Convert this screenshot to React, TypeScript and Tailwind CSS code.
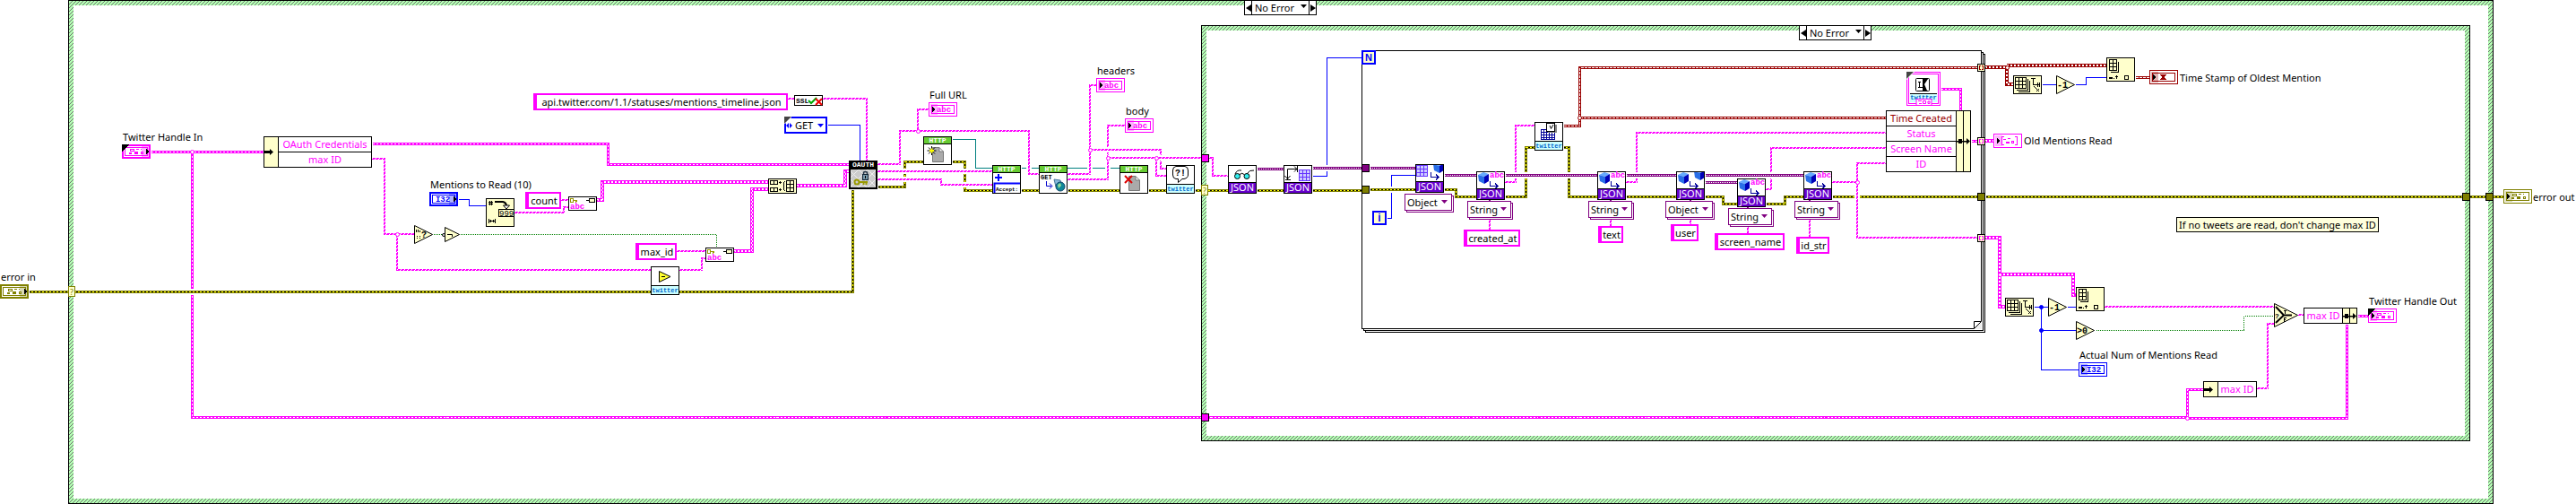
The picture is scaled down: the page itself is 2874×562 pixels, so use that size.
import React from "react";

type WireKind =
  | "string"
  | "stringArray"
  | "cluster"
  | "clusterArray"
  | "error"
  | "time"
  | "timeArray"
  | "object"
  | "blue"
  | "teal"
  | "bool"
  | "stub";

type Layer = { c: string; w: number; dash?: string; phase?: number; d?: number };

const PINK = "#ff00ff";
const RED = "#990000";
const PURPLE = "#800080";
const OLIVE = "#808000";
const CREAM = "#ffffcc";

const KINDS: Record<WireKind, { shift: number; layers: Layer[] }> = {
  string: {
    shift: 0,
    layers: [
      { c: PINK, w: 2 },
      { c: "#ffffff", w: 1, dash: "1 3", d: -0.5 },
      { c: "#ffffff", w: 1, dash: "1 3", phase: 2, d: 0.5 },
    ],
  },
  stringArray: {
    shift: 0,
    layers: [
      { c: PINK, w: 4 },
      { c: "#ffffff", w: 1, dash: "2 2", d: -0.5 },
      { c: "#ffffff", w: 1, dash: "2 2", phase: 1, d: 0.5 },
    ],
  },
  cluster: { shift: 0.5, layers: [{ c: PINK, w: 3 }, { c: "#ffffff", w: 1, dash: "2 2" }] },
  clusterArray: {
    shift: 0,
    layers: [
      { c: PINK, w: 4 },
      { c: "#ffffff", w: 1, dash: "2 2", d: -0.5 },
      { c: "#ffffff", w: 1, dash: "2 2", phase: 1, d: 0.5 },
    ],
  },
  error: {
    shift: 0.5,
    layers: [
      { c: OLIVE, w: 3 },
      { c: "#ffff00", w: 1 },
      { c: "#000000", w: 1, dash: "2 2" },
    ],
  },
  time: { shift: 0.5, layers: [{ c: RED, w: 3 }, { c: "#ffffff", w: 1, dash: "3 1" }] },
  timeArray: {
    shift: 0,
    layers: [
      { c: RED, w: 4 },
      { c: "#ffffff", w: 1, dash: "2 2", d: -0.5 },
      { c: "#ffffff", w: 1, dash: "2 2", phase: 1, d: 0.5 },
    ],
  },
  object: { shift: 0.5, layers: [{ c: PURPLE, w: 3 }, { c: "#ffffff", w: 1, dash: "1 1" }] },
  blue: { shift: 0.5, layers: [{ c: "#0000ff", w: 1 }] },
  teal: { shift: 0.5, layers: [{ c: "#008080", w: 1 }] },
  bool: { shift: 0.5, layers: [{ c: "#007f00", w: 1, dash: "1 1" }] },
  stub: { shift: 0, layers: [{ c: PURPLE, w: 2 }] },
};

/* kind, path, true when it jumps over the wires drawn before it */
const WIRES: [WireKind, string, boolean?][] = [
  ["cluster", "M168 169H294"],
  ["cluster", "M214 169V465H2440"],
  ["cluster", "M2440 466H2618V361"],
  ["cluster", "M2440 467V434H2458"],
  ["cluster", "M415 160H678V183H947"],
  ["string", "M415 177H429V261H462"],
  ["string", "M443 261V301H726"],
  ["string", "M758 301H783V288H787"],
  ["bool", "M483 261H493"],
  ["bool", "M513 261H799V276"],
  ["string", "M755 280H787"],
  ["string", "M626 223H634"],
  ["string", "M574 237H629V231H634"],
  ["blue", "M511 222H523V229H542"],
  ["stringArray", "M819 280H839V211H857"],
  ["stringArray", "M666 223H672V203H857"],
  ["stringArray", "M889 207H943V191H947"],
  ["string", "M879 110H886"],
  ["string", "M918 110H967V179"],
  ["blue", "M923 139H959V179"],
  ["error", "M32 325H951V211", true],
  ["error", "M979 208H1009V180H1030"],
  ["error", "M1062 180H1076V212H1107"],
  ["error", "M1139 212H1159"],
  ["error", "M1191 212H1249"],
  ["error", "M1281 212H1301"],
  ["error", "M1333 212H1370"],
  ["teal", "M1062 155H1088V187H1107"],
  ["teal", "M1139 187H1249"],
  ["string", "M979 191H1107", true],
  ["string", "M979 200H1050V206H1107", true],
  ["string", "M979 183H1004V146H1148V194H1159", true],
  ["string", "M1024 146V122H1036"],
  ["string", "M1191 200H1236V140H1255", true],
  ["string", "M1191 194H1216V95H1223", true],
  ["string", "M1216 167H1295V188H1301", true],
  ["string", "M1236 176H1340", true],
  ["string", "M1290 176V196H1301"],
  ["string", "M1349 176H1353V196H1370"],
  ["object", "M1402 188H1432"],
  ["blue", "M1464 196H1480V64H1519"],
  ["object", "M1464 187H1519", true],
  ["error", "M1402 212H1432"],
  ["error", "M1464 212H1519"],
  ["object", "M1528 187H1579"],
  ["blue", "M1547 243H1552V195H1579"],
  ["error", "M1528 211H1579", true],
  ["object", "M1611 195H1647"],
  ["error", "M1611 211H1624V219H1647"],
  ["string", "M1679 203H1691V140H1712"],
  ["error", "M1679 219H1702V164H1712"],
  ["error", "M1744 164H1750V219H1782"],
  ["time", "M1744 140H1762V75H2206"],
  ["time", "M1762 131H2104"],
  ["string", "M1814 203H1826V148H2104"],
  ["error", "M1814 219H1870"],
  ["object", "M1679 195H1782", true],
  ["object", "M1814 195H1870", true],
  ["error", "M1902 219H1922V227H1938"],
  ["error", "M1970 227H1991V219H2012"],
  ["string", "M1970 211H1976V165H2104"],
  ["object", "M1902 195H2012", true],
  ["object", "M1902 203H1938"],
  ["error", "M2044 219H2206"],
  ["string", "M2104 182H2072V265H2206", true],
  ["string", "M2044 203H2072"],
  ["cluster", "M2165 99H2187V123"],
  ["cluster", "M2199 157H2206"],
  ["clusterArray", "M2215 157H2224"],
  ["error", "M2215 219H2793"],
  ["timeArray", "M2215 75H2239V94H2246"],
  ["timeArray", "M2239 73H2350"],
  ["blue", "M2278 94H2294"],
  ["blue", "M2315 94H2327V86H2350"],
  ["time", "M2382 86H2398"],
  ["stringArray", "M2215 265H2231V342H2237"],
  ["stringArray", "M2231 306H2313V329H2316"],
  ["blue", "M2269 342H2285"],
  ["blue", "M2306 342H2316"],
  ["blue", "M2277 342V412H2319"],
  ["blue", "M2277 368H2316"],
  ["string", "M2348 342H2537"],
  ["bool", "M2338 368H2503V352H2537"],
  ["string", "M2518 433H2530V361H2537"],
  ["string", "M2564 351H2570"],
  ["cluster", "M2630 352H2642"],
  ["string", "M1662 245V256"],
  ["string", "M1797 245V252"],
  ["string", "M1886 245V250"],
  ["string", "M1950 253V260"],
  ["string", "M2019 245V264"],
  ["stub", "M1662 222V225"],
  ["stub", "M1797 222V225"],
  ["stub", "M1886 222V225"],
  ["stub", "M1950 230V233"],
  ["stub", "M2019 222V225"],
];

const JUNCTIONS: [number, number, string, boolean][] = [
  [214, 169, PINK, false],
  [443, 261, PINK, false],
  [1024, 146, PINK, false],
  [1216, 167, PINK, false],
  [1236, 176, PINK, false],
  [1290, 176, PINK, false],
  [2072, 203, PINK, false],
  [1762, 131, RED, false],
  [2239, 75, RED, false],
  [2231, 306, PINK, false],
  [2440, 466, PINK, false],
  [2277, 342, "#0000ff", true],
  [2277, 368, "#0000ff", true],
];

function Wire({ kind, d, over }: { kind: WireKind; d: string; over?: boolean }) {
  const k = KINDS[kind];
  return (
    <g transform={`translate(${k.shift} ${k.shift})`}>
      {over && <path d={d} stroke="#ffffff" strokeWidth={k.layers[0].w + 4} />}
      {k.layers.map((l, i) => (
        <path
          key={i}
          d={d}
          stroke={l.c}
          strokeWidth={l.w}
          strokeDasharray={l.dash}
          strokeDashoffset={l.phase}
          transform={l.d ? `translate(${l.d} ${l.d})` : undefined}
        />
      ))}
    </g>
  );
}

function Wires() {
  return (
    <svg
      width="2874"
      height="562"
      viewBox="0 0 2874 562"
      fill="none"
      className="relative block max-w-none"
      shapeRendering="crispEdges"
      aria-hidden="true"
    >
      {WIRES.map(([kind, d, over], i) => (
        <Wire key={i} kind={kind} d={d} over={over} />
      ))}
      {JUNCTIONS.map(([x, y, c, solid], i) => (
        <circle
          key={i}
          cx={x + 0.5}
          cy={y + 0.5}
          r={2}
          fill={solid ? c : "#ffffff"}
          stroke={c}
          strokeWidth={1}
          shapeRendering="auto"
        />
      ))}
    </svg>
  );
}

/* ---------- text parts ---------- */

function Label({ at, children }: { at: string; children: string }) {
  return <span className={`absolute leading-4 whitespace-nowrap ${at}`}>{children}</span>;
}

function StringConst({ at, children }: { at: string; children: string }) {
  return (
    <div
      className={`absolute flex h-[19px] items-center justify-center border-2 border-l-4 border-[#ff00ff] bg-white leading-4 whitespace-nowrap ${at}`}
    >
      {children}
    </div>
  );
}

function Caret({ className }: { className: string }) {
  return (
    <svg viewBox="0 0 7 4" className={`pointer-events-none absolute h-1 w-[7px] ${className}`} aria-hidden="true">
      <path d="M0 0H7L3.5 4Z" fill="currentColor" />
    </svg>
  );
}

function TypePicker({ at, value, name }: { at: string; value: "String" | "Object"; name: string }) {
  return (
    <div className={`absolute h-[19px] ${value === "String" ? "w-[49px]" : "w-[53px]"} ${at}`}>
      <div className="absolute top-0.5 left-0.5 h-full w-full border border-[#800080] bg-white" />
      <div className="relative h-full border border-[#800080] bg-white text-[#800080]">
        <select
          aria-label={name}
          defaultValue={value}
          className="block h-full w-full appearance-none bg-transparent pl-0.5 leading-4 text-black"
        >
          <option>String</option>
          <option>Object</option>
        </select>
        <Caret className="top-1.5 right-1" />
      </div>
    </div>
  );
}

function CaseSelector({ at, name }: { at: string; name: string }) {
  return (
    <div className={`absolute flex h-[17px] w-[81px] border border-black bg-white ${at}`}>
      <button type="button" aria-label="Previous case" className="flex w-[7px] items-center justify-center">
        <svg viewBox="0 0 6 8" className="h-2 w-1.5">
          <path d="M6 0V8L0 4Z" />
        </svg>
      </button>
      <div className="relative grow border-x border-black">
        <select
          aria-label={name}
          defaultValue="No Error"
          className="block h-full w-full appearance-none bg-transparent pl-[3px] leading-4"
        >
          <option>No Error</option>
          <option>Error</option>
        </select>
        <Caret className="top-1 right-0.5" />
      </div>
      <button type="button" aria-label="Next case" className="flex w-[7px] items-center justify-center">
        <svg viewBox="0 0 6 8" className="h-2 w-1.5">
          <path d="M0 0V8L6 4Z" />
        </svg>
      </button>
    </div>
  );
}

function CaseFrame({ at }: { at: string }) {
  return (
    <div
      className={`absolute border border-black bg-[linear-gradient(135deg,#b3ffb3_40%,#707070_40%_60%,#b3ffb3_60%)] bg-size-[4px_4px] p-[5px] ${at}`}
    >
      <div className="h-full bg-white" />
    </div>
  );
}

/* ---------- terminals ---------- */

const MONO = "font-['Liberation_Mono',monospace] font-bold";

function ClusterGlyph({ x, c }: { x: number; c: string }) {
  return (
    <g transform={`translate(${x} 0)`} fill="none" stroke={c}>
      <rect x="1.5" y="5.5" width="4" height="2" />
      <path d="M8 5.5H11M13 5.5H14" />
      <path d="M0 9.5H3M0 10.5H3M6 8.5H10M6 9.5H10M6 10.5H10" />
      <rect x="13.5" y="8.5" width="2" height="2" />
    </g>
  );
}

function Terminal({
  at,
  color,
  text,
  control,
  corner,
  glyph,
}: {
  at: string;
  color: string;
  text?: string;
  control?: boolean;
  corner?: boolean;
  glyph?: "cluster" | "array" | "time";
}) {
  return (
    <svg viewBox="0 0 32 16" className={`absolute h-4 w-8 ${at}`} shapeRendering="crispEdges">
      <rect width="32" height="16" fill={color} />
      {control ? (
        <rect x="2" y="2" width="28" height="12" fill="#ffffff" />
      ) : (
        <rect x="1" y="1" width="30" height="14" fill="#ffffff" />
      )}
      {glyph !== "array" && <rect x="3.5" y="3.5" width="25" height="9" fill="none" stroke={color} />}
      {text && (
        <text
          x={control ? 15 : 17}
          y="11"
          textAnchor="middle"
          fill={color}
          className={`${MONO} text-[9px]`}
        >
          {text}
        </text>
      )}
      {glyph === "cluster" && <ClusterGlyph x={control ? 8 : 9} c={color} />}
      {glyph === "array" && (
        <g stroke={color} fill="none">
          <path d="M24 3.5H26.5V12.5H24M12 3.5H9.5V12.5H12" />
          <path d="M11 6.5H14M16 5.5H19M14 9.5H18M14 10.5H18" />
          <rect x="20.5" y="8.5" width="2" height="2" />
        </g>
      )}
      {glyph === "time" && (
        <g fill={color}>
          <path d="M12 5H19V6H18L16.5 8L18 10H19V11H12V10H13L14.5 8L13 6H12Z" />
        </g>
      )}
      <rect x={control ? 22 : 2} y="2" width="8" height="12" fill={color} opacity="0.3" />
      <path d={control ? "M27 5L30 8L27 11Z" : "M4 4.5L7 8L4 11.5Z"} fill="#000000" />
      {corner && <path d="M0 0H8L0 8Z" fill="#000000" />}
    </svg>
  );
}

function Tunnel({ at, fill }: { at: string; fill: string }) {
  return <div className={`absolute h-[9px] w-[9px] border border-black ${fill} ${at}`} />;
}

function IndexTunnel({ at, color }: { at: string; color: string }) {
  return (
    <svg viewBox="0 0 9 9" className={`absolute h-[9px] w-[9px] ${at}`} shapeRendering="crispEdges">
      <rect x="0.5" y="0.5" width="8" height="8" fill={CREAM} stroke="#000000" />
      <path d="M4 2.5H2.5V6.5H4M5 2.5H6.5V6.5H5" fill="none" stroke={color} />
    </svg>
  );
}

function ErrorSelector({ at }: { at: string }) {
  return (
    <div
      className={`absolute flex h-3 w-2 items-center justify-center border border-[#808000] bg-[#ffffcc] text-[9px] leading-none text-[#808000] ${at}`}
    >
      ?
    </div>
  );
}

/* ---------- node icons ---------- */

function Icon({ at, label, children }: { at: string; label: string; children: React.ReactNode }) {
  return (
    <svg
      viewBox="0 0 32 32"
      className={`absolute h-8 w-8 overflow-visible ${at}`}
      role="img"
      aria-label={label}
      fill="none"
    >
      <rect x="0.5" y="0.5" width="31" height="31" fill="#ffffff" stroke="#000000" />
      {children}
    </svg>
  );
}

function TwitterBand() {
  return (
    <g>
      <rect x="1" y="22" width="30" height="9" fill="#ccffff" />
      <path d="M0 21.5H32" stroke="#000000" />
      <text x="16" y="29" textAnchor="middle" fill="#0066cc" className={`${MONO} text-[7px]`}>
        twitter
      </text>
    </g>
  );
}

function JsonBand() {
  return (
    <g>
      <rect x="1" y="20" width="30" height="11" fill="#6600cc" />
      <path d="M0 19.5H32" stroke="#000000" />
      <text x="16" y="29" textAnchor="middle" fill="#ffffff" className="text-[11px]">
        JSON
      </text>
    </g>
  );
}

function HttpBand() {
  return (
    <g>
      <rect x="1" y="1" width="30" height="7" fill="#66cc33" />
      <path d="M0 8.5H32" stroke="#000000" />
      <text x="16" y="7" textAnchor="middle" fill="#ffffff" className={`${MONO} text-[8px]`}>
        HTTP
      </text>
    </g>
  );
}

function Cube({ x, y }: { x: number; y: number }) {
  return (
    <g transform={`translate(${x} ${y})`}>
      <path d="M0 3L6 0L12 2L7 5Z" fill="#66aaff" />
      <path d="M0 3L7 5V13L1 10Z" fill="#2a6fe8" />
      <path d="M7 5L12 2V10L7 13Z" fill="#0000b8" />
    </g>
  );
}

function Elbow({ x, y }: { x: number; y: number }) {
  return (
    <path
      transform={`translate(${x} ${y})`}
      d="M0.5 0V5.5H9M6 2.5L9 5.5L6 8.5"
      stroke="#000099"
      shapeRendering="crispEdges"
    />
  );
}

function Grid({ x, y }: { x: number; y: number }) {
  return (
    <g transform={`translate(${x} ${y})`} shapeRendering="crispEdges">
      <rect x="0.5" y="0.5" width="12" height="12" fill="#ccccff" stroke="#6633ff" />
      <path d="M4.5 0V13M8.5 0V13M0 4.5H13M0 8.5H13" stroke="#6633ff" />
    </g>
  );
}

/* the second cube is cut by the top edge of its node */
function CutCube({ x }: { x: number }) {
  return (
    <svg x="0" y="1" width="31" height="18">
      <Cube x={x} y={-4} />
    </svg>
  );
}

function JsonGet({ at, label, object }: { at: string; label: string; object?: boolean }) {
  return (
    <Icon at={at} label={label}>
      <Cube x={2} y={1} />
      {object ? (
        <CutCube x={20} />
      ) : (
        <text x="15" y="7" fill={PINK} className={`${MONO} text-[9px]`}>
          abc
        </text>
      )}
      <Elbow x={15} y={11} />
      <JsonBand />
    </Icon>
  );
}

function Page({ x, y }: { x: number; y: number }) {
  return (
    <path
      transform={`translate(${x} ${y})`}
      d="M0.5 0.5H8L12.5 5V16.5H0.5ZM8 0.5V5H12.5"
      fill="#aaaaaa"
      stroke="#777777"
    />
  );
}

function KeyAbc({ at }: { at: string }) {
  return (
    <svg
      viewBox="0 0 32 16"
      className={`absolute h-4 w-8 overflow-visible ${at}`}
      fill="none"
      shapeRendering="crispEdges"
    >
      <rect x="0.5" y="0.5" width="31" height="15" fill="#ffffff" stroke="#000000" />
      <path d="M2.5 2.5H5.5V6.5H2.5ZM6 4.5H10M8.5 4V7M9.5 4V6" stroke="#999900" />
      <text x="2" y="14" fill={PINK} className={`${MONO} text-[9px]`}>
        abc
      </text>
      <path d="M20 4.5H23" stroke="#000000" />
      <rect x="23.5" y="2.5" width="6" height="4" fill={CREAM} stroke="#000000" />
    </svg>
  );
}

function ArraySize({ at }: { at: string }) {
  return (
    <svg viewBox="0 0 32 21" className={`absolute h-[21px] w-8 ${at}`} fill="none" shapeRendering="crispEdges">
      <rect x="0.5" y="0.5" width="31" height="20" fill={CREAM} stroke="#000000" />
      <path d="M6 18.5H18.5V6M4 16.5H16.5V4" stroke="#000000" />
      <rect x="2.5" y="2.5" width="12" height="12" fill={CREAM} stroke="#000000" />
      <path d="M6.5 2V15M10.5 2V15M2 6.5H15M2 10.5H15" stroke="#000000" />
      <path d="M20 3.5H25M22.5 3V10.5H30M27.5 8V13M29.5 8V13M23 12L29 18M26 18L29 15" stroke="#000000" />
    </svg>
  );
}

function IndexArray({ at }: { at: string }) {
  return (
    <svg viewBox="0 0 32 27" className={`absolute h-[27px] w-8 ${at}`} fill="none" shapeRendering="crispEdges">
      <rect x="0.5" y="0.5" width="31" height="26" fill={CREAM} stroke="#000000" />
      <path d="M5 16.5H13.5V5" stroke="#000000" />
      <rect x="3.5" y="2.5" width="8" height="12" stroke="#000000" />
      <path d="M7.5 2V15M3 6.5H12M3 10.5H12" stroke="#000000" />
      <path d="M3 22.5H7M3 23.5H7M8 23.5H9M10 21.5H13M11.5 20V24" stroke="#000000" />
      <rect x="20.5" y="20.5" width="4" height="4" stroke="#000000" />
    </svg>
  );
}

function Tri({ at, text }: { at: string; text: string }) {
  return (
    <svg viewBox="0 0 21 21" className={`absolute h-[21px] w-[21px] ${at}`} fill="none">
      <path d="M0.5 0.5L20.5 10.5L0.5 20.5Z" fill={CREAM} stroke="#000000" />
      <text x="1" y="14" fill="#000000" className={`${MONO} text-[10px]`}>
        {text}
      </text>
    </svg>
  );
}

function BundleArrow() {
  return (
    <svg viewBox="0 0 10 7" className="h-[7px] w-2.5">
      <path d="M0 2H6V0L10 3.5L6 7V5H0Z" />
    </svg>
  );
}

const CELL = "box-content flex h-4 items-center justify-center whitespace-nowrap leading-4";

export default function App() {
  return (
    <main className="min-h-screen w-full overflow-x-auto bg-white font-['Noto_Sans',sans-serif] text-[11px] text-black">
      <div className="relative w-max">
        <CaseFrame at="left-[76px] top-0 w-[2706px] h-[562px]" />
        <CaseFrame at="left-[1340px] top-[28px] w-[1416px] h-[464px]" />
        <div className="absolute top-[60px] left-[1523px] h-[311px] w-[692px] border border-black bg-white" />
        <div className="absolute top-[58px] left-[1521px] h-[311px] w-[692px] border border-black bg-white" />
        <div className="absolute top-[56px] left-[1519px] h-[311px] w-[692px] border border-black bg-white" />

        <Wires />

        <svg viewBox="0 0 9 9" className="absolute top-[358px] left-[2202px] h-[9px] w-[9px]" fill="none">
          <path d="M0.5 8.5V0.5H8.5Z" fill="#ffffff" stroke="#000000" />
          <path d="M0 9L9 0V9Z" fill="#eeeeee" />
          <path d="M0.5 8.5L8.5 0.5" stroke="#000000" />
        </svg>

        <CaseSelector at="left-[1388px] top-0" name="Outer case" />
        <CaseSelector at="left-[2007px] top-[28px]" name="Inner case" />

        {/* inputs */}
        <Label at="left-[137px] top-[145px]">Twitter Handle In</Label>
        <Terminal at="left-[136px] top-[161px]" color={PINK} glyph="cluster" control corner />
        <Label at="left-px top-[301px]">error in</Label>
        <Terminal at="left-0 top-[317px]" color={OLIVE} glyph="cluster" control />
        <ErrorSelector at="left-[76px] top-[319px]" />

        <div className="absolute top-[152px] left-[294px] flex w-[121px] border border-black bg-white">
          <div className="flex w-4 items-center border-r border-black bg-[#ffffcc]">
            <BundleArrow />
          </div>
          <div className="grow divide-y divide-black text-[#ff00ff]">
            <div className={CELL}>OAuth Credentials</div>
            <div className={CELL}>max ID</div>
          </div>
        </div>

        {/* empty test and not */}
        <svg viewBox="0 0 21 21" className="absolute top-[251px] left-[462px] h-[21px] w-[21px]" fill="none">
          <path d="M0.5 0.5L20.5 10.5L0.5 20.5Z" fill={CREAM} stroke="#000000" />
          <path d="M2.5 5V8M4.5 5V8M6.5 6V8M3 12.5H4M6 12.5H7M3 14.5H4M6 14.5H7" stroke="#000000" />
          <text x="8" y="14" fill="#000000" className={`${MONO} text-[10px]`}>
            ?
          </text>
        </svg>
        <svg viewBox="0 0 20 17" className="absolute top-[253px] left-[493px] h-[17px] w-5" fill="none">
          <path d="M3.5 0.5L19.5 8.5L3.5 16.5Z" fill={CREAM} stroke="#000000" />
          <circle cx="2" cy="9" r="1.5" fill="#ffffff" stroke="#000000" />
          <path d="M6 8.5H11.5V11" stroke="#000000" />
        </svg>

        <Label at="left-[480px] top-[198px]">Mentions to Read (10)</Label>
        <Terminal at="left-[479px] top-[214px]" color="#0000ff" text="I32" control />
        <svg viewBox="0 0 32 32" className="absolute top-[221px] left-[542px] h-8 w-8" fill="none">
          <rect x="0.5" y="0.5" width="31" height="31" fill={CREAM} stroke="#000000" />
          <path d="M3 4.5H8M3 6.5H8M4.5 3V8M6.5 3V8" stroke="#000000" shapeRendering="crispEdges" />
          <path d="M10 4H19Q23 5 23 9" stroke="#000000" strokeWidth="2" />
          <path d="M19.5 8H26.5L23 12Z" fill="#ffffff" stroke="#000000" />
          <rect x="14.5" y="12.5" width="17" height="8" stroke="#000000" />
          <text x="15" y="20" fill="#000000" className="font-['Liberation_Mono',monospace] text-[9px]">
            999
          </text>
          <path d="M3.5 23V28M10.5 23V28M3 25.5H11M5.5 24V27M8.5 24V27" stroke="#000000" shapeRendering="crispEdges" />
        </svg>
        <StringConst at="left-[586px] top-[214px] w-[40px]">count</StringConst>
        <KeyAbc at="left-[634px] top-[219px]" />
        <StringConst at="left-[709px] top-[271px] w-[46px]">max_id</StringConst>
        <KeyAbc at="left-[787px] top-[276px]" />
        <Icon at="left-[726px] top-[297px]" label="Decrement identifier">
          <path d="M9.5 5.5L22 11.5L9.5 17.5Z" fill="#ffff33" stroke="#000000" />
          <path d="M12 11.5H16" stroke="#000000" />
          <TwitterBand />
        </Icon>

        <svg
          viewBox="0 0 32 17"
          className="absolute top-[199px] left-[857px] h-[17px] w-8"
          fill="none"
          shapeRendering="crispEdges"
        >
          <rect x="0.5" y="0.5" width="31" height="16" fill={CREAM} stroke="#000000" />
          <path d="M2.5 2.5H10.5V6.5H2.5ZM6.5 2V7M2.5 10.5H10.5V14.5H2.5ZM6.5 10V15" stroke="#000000" />
          <path d="M12 4.5H15M13.5 3V6M12 12.5H15M13.5 11V14" stroke="#000000" />
          <path d="M18.5 3L17.5 5V12L18.5 14M20.5 2.5H28.5V14.5H20.5ZM24.5 2V15M20 6.5H29M20 10.5H29" stroke="#000000" />
        </svg>

        <StringConst at="left-[595px] top-[104px] w-[284px]">
          api.twitter.com/1.1/statuses/mentions_timeline.json
        </StringConst>
        <svg viewBox="0 0 32 12" className="absolute top-[106px] left-[886px] h-3 w-8" fill="none">
          <rect x="0.5" y="0.5" width="31" height="11" fill="#ffffff" stroke="#000000" />
          <text x="2" y="9" fill="#000000" className={`${MONO} text-[8px]`}>
            SSL
          </text>
          <path d="M16 6L19 9L25 3" stroke="#00aa00" strokeWidth="2" />
          <path d="M24 4L31 11M31 4L24 11" stroke="#ee0000" strokeWidth="2" />
        </svg>

        <div className="absolute top-[130px] left-[875px] h-[19px] w-12 border-2 border-[#0000ff] bg-white text-[#0000ff]">
          <select
            aria-label="HTTP method"
            defaultValue="GET"
            className="block h-full w-full appearance-none bg-transparent pl-2.5 leading-4 text-black"
          >
            <option>GET</option>
            <option>POST</option>
          </select>
          <Caret className="top-1.5 right-0.5" />
          <svg viewBox="0 0 7 6" className="pointer-events-none absolute top-[5px] left-0 h-1.5 w-[7px]">
            <path d="M3 0V6L0 3ZM4 0V6L7 3Z" fill="#0000ff" />
          </svg>
          <svg viewBox="0 0 8 8" className="pointer-events-none absolute -top-0.5 -left-0.5 h-2 w-2">
            <path d="M0 0H8V1L1 8H0Z" fill="#ffffff" />
            <path d="M0 0H8L0 8Z" fill="#444444" />
          </svg>
        </div>

        <Icon at="left-[947px] top-[179px]" label="OAuth request">
          <rect x="2" y="10" width="28" height="20" fill="#cccccc" />
          <path
            d="M2 19L11 10M2 29L21 10M11 30L30 11M21 30L30 21M2 21L11 30M2 12L20 30M11 10L30 29M21 10L30 19"
            stroke="#eeeeee"
          />
          <rect x="0" y="0" width="32" height="9" fill="#000000" />
          <text x="16" y="7" textAnchor="middle" fill="#ffffff" className={`${MONO} text-[8px]`}>
            OAUTH
          </text>
          <path d="M16.5 17V14Q16.500 12.500 18.500 12.500Q20.500 12.500 20.500 14V17" stroke="#223344" strokeWidth="1.500" />
          <rect x="15.500" y="15.500" width="6" height="6" fill="#7799aa" stroke="#112233" />
          <path d="M18.500 17V20" stroke="#000000" />
          <circle cx="9" cy="24" r="2.500" stroke="#999900" strokeWidth="2" />
          <path d="M11 24H21M16.500 24V27M19.500 24V27" stroke="#999900" strokeWidth="2" />
          <rect x="1.500" y="9.500" width="29" height="21" stroke="#000000" />
          <path d="M0.500 8V31.500H31.500V8" stroke="#000000" />
        </Icon>

        {/* request chain */}
        <Icon at="left-[1030px] top-[152px]" label="Open HTTP handle">
          <Page x={10} y={12} />
          <path d="M9.500 11V21M4.500 16H14.500M6 12.500L13 19.500M13 12.500L6 19.500" stroke="#000000" />
          <path d="M9.500 13.500V18.500M7 16H12" stroke="#ffff00" strokeWidth="2" />
          <HttpBand />
        </Icon>
        <Icon at="left-[1107px] top-[184px]" label="Add HTTP header">
          <path d="M7 10V18M3 14H11" stroke="#0000ff" strokeWidth="2" />
          <path d="M2.500 31V20.500H31" stroke="#0000ff" strokeWidth="2" />
          <rect x="4" y="22" width="27" height="9" fill="#ffffff" />
          <text x="4" y="29" fill="#000000" className={`${MONO} text-[6px]`}>
            Accept:
          </text>
          <path d="M0.500 8V31.500H31.500V8" stroke="#000000" />
          <HttpBand />
        </Icon>
        <Icon at="left-[1159px] top-[184px]" label="HTTP GET">
          <text x="2" y="16" fill="#000000" className={`${MONO} text-[7px]`}>
            GET
          </text>
          <path d="M8.500 18V23.500H14M12 20.500L15 23.500L12 26.500" stroke="#0000cc" />
          <path d="M17 16L24 17L26 26L19 24Z" fill="#88bbdd" stroke="#447799" />
          <circle cx="24" cy="24" r="5" fill="#118899" stroke="#114466" />
          <path d="M21 22L24 20L25 23L22 26Z" fill="#99dd99" />
          <HttpBand />
        </Icon>
        <Icon at="left-[1249px] top-[184px]" label="Close HTTP handle">
          <Page x={10} y={12} />
          <path d="M6 12L14 20M14 12L6 20" stroke="#dd0000" strokeWidth="2" />
          <HttpBand />
        </Icon>
        <Icon at="left-[1301px] top-[184px]" label="Check response">
          <path
            d="M11 1.500H21Q24.500 2 24.500 6V11Q24.500 14.500 20 15.500H18L13.500 19.500V15.500H11Q7.500 15 7.500 11V6Q7.500 2 11 1.500Z"
            fill="#ffffff"
            stroke="#000000"
          />
          <text x="16" y="12" textAnchor="middle" fill="#000000" className={`${MONO} text-[10px]`}>
            ?!
          </text>
          <TwitterBand />
        </Icon>

        <Label at="left-[1037px] top-[98px]">Full URL</Label>
        <Terminal at="left-[1036px] top-[114px]" color={PINK} text="abc" />
        <Label at="left-[1224px] top-[71px]">headers</Label>
        <Terminal at="left-[1223px] top-[87px]" color={PINK} text="abc" />
        <Label at="left-[1256px] top-[116px]">body</Label>
        <Terminal at="left-[1255px] top-[132px]" color={PINK} text="abc" />

        <Tunnel at="left-[1340px] top-[172px]" fill="bg-[#ff00ff]" />
        <Tunnel at="left-[1340px] top-[461px]" fill="bg-[#ff00ff]" />
        <ErrorSelector at="left-[1340px] top-[206px]" />

        {/* parsing */}
        <Icon at="left-[1370px] top-[184px]" label="Read JSON">
          <path d="M8 10Q10 5 15 6M21 10Q24 5 29 6" stroke="#000000" />
          <path d="M13 10.500Q16 8 18 10.500" stroke="#000000" />
          <circle cx="10.500" cy="12.500" r="3" fill="#33eeee" stroke="#000000" />
          <circle cx="21" cy="12.500" r="3" fill="#33eeee" stroke="#000000" />
          <JsonBand />
        </Icon>
        <Icon at="left-[1432px] top-[184px]" label="JSON array size">
          <path
            d="M4.500 16V4.500H15M12 1.500L15 4.500L12 7.500M15.500 1V8M1.500 12L4.500 15.500L7.500 12M2 16.500H8"
            stroke="#000000"
          />
          <Grid x={17} y={5} />
          <JsonBand />
        </Icon>

        <svg viewBox="0 0 16 16" className="absolute top-[56px] left-[1519px] h-4 w-4">
          <rect x="1" y="1" width="14" height="14" fill={CREAM} stroke="#0000ff" strokeWidth="2" />
          <text
            x="8"
            y="12"
            textAnchor="middle"
            fill="#0000ff"
            className="font-['Liberation_Sans',sans-serif] text-[11px] font-bold"
          >
            N
          </text>
        </svg>
        <svg viewBox="0 0 16 16" className="absolute top-[235px] left-[1531px] h-4 w-4">
          <rect x="1" y="1" width="14" height="14" fill={CREAM} stroke="#0000ff" strokeWidth="2" />
          <text
            x="8"
            y="12"
            textAnchor="middle"
            fill="#0000ff"
            className="font-['Liberation_Sans',sans-serif] text-[12px] font-bold"
          >
            i
          </text>
        </svg>
        <Tunnel at="left-[1519px] top-[183px]" fill="bg-[#800080]" />
        <Tunnel at="left-[1519px] top-[207px]" fill="bg-[#808000]" />

        <Icon at="left-[1579px] top-[183px]" label="JSON array element">
          <Grid x={1} y={1} />
          <CutCube x={20} />
          <Elbow x={17} y={9} />
          <JsonBand />
        </Icon>
        <TypePicker at="left-[1567px] top-[216px]" value="Object" name="Element type" />

        <JsonGet at="left-[1647px] top-[191px]" label="Get created_at" />
        <TypePicker at="left-[1637px] top-[224px]" value="String" name="created_at type" />
        <StringConst at="left-[1633px] top-[256px] w-[63px]">created_at</StringConst>

        <Icon at="left-[1712px] top-[136px]" label="Parse time">
          <g shapeRendering="crispEdges">
            <path
              d="M7 8.500H22M7 11.500H23M7 14.500H23M7 17.500H23M7 19.500H23M7.500 8V20M10.500 8V20M13.500 8V20M16.500 8V20M19.500 8V20M22.500 8V20"
              stroke="#000099"
            />
            <rect x="14.500" y="2.500" width="10" height="9" fill="#888888" />
            <rect x="13.500" y="1.500" width="9" height="9" fill="#ffffff" stroke="#000000" />
          </g>
          <path d="M17 4L18.500 7.500L21 3" stroke="#000000" />
          <TwitterBand />
        </Icon>

        <JsonGet at="left-[1782px] top-[191px]" label="Get text" />
        <TypePicker at="left-[1772px] top-[224px]" value="String" name="text type" />
        <StringConst at="left-[1783px] top-[252px] w-[28px]">text</StringConst>

        <JsonGet at="left-[1870px] top-[191px]" label="Get user" object />
        <TypePicker at="left-[1858px] top-[224px]" value="Object" name="user type" />
        <StringConst at="left-[1864px] top-[250px] w-[31px]">user</StringConst>

        <JsonGet at="left-[1938px] top-[199px]" label="Get screen_name" />
        <TypePicker at="left-[1928px] top-[232px]" value="String" name="screen_name type" />
        <StringConst at="left-[1913px] top-[260px] w-[78px]">screen_name</StringConst>

        <JsonGet at="left-[2012px] top-[191px]" label="Get id_str" />
        <TypePicker at="left-[2002px] top-[224px]" value="String" name="id_str type" />
        <StringConst at="left-[2004px] top-[264px] w-[37px]">id_str</StringConst>

        <svg viewBox="0 0 38 38" className="absolute top-[80px] left-[2127px] h-[38px] w-[38px]" fill="none">
          <rect x="0.500" y="0.500" width="37" height="37" fill="#ffffff" stroke={PINK} />
          <rect x="2.500" y="2.500" width="33" height="33" stroke={PINK} />
          <rect x="10.500" y="7.500" width="15" height="14" rx="1" fill="#ffffff" stroke="#000000" />
          <path d="M18 8H24L20 14L23 21H18Z" fill="#000000" />
          <path d="M13 11.500H16M14.500 11V18M13 17.500H20M18 15L21 17.500L18 20" stroke="#000000" />
          <path d="M4 24.500H34" stroke="#000000" />
          <rect x="4" y="25" width="30" height="9" fill="#ccffff" />
          <text x="19" y="31" textAnchor="middle" fill="#0066cc" className={`${MONO} text-[7px]`}>
            twitter
          </text>
          <path d="M11 37V30.500H28V37" fill="#ffffff" stroke={PINK} />
          <path d="M13 32.500H17M14 35.500H17M18.500 32.500H21.500V35.500H18.500ZM24 33H26V35.500H24Z" stroke={PINK} />
          <path d="M0 0H9L0 9Z" fill="#ffffff" />
          <path d="M0 0H8L0 8Z" fill="#444444" />
        </svg>

        <div className="absolute top-[123px] left-[2104px] flex w-[95px] border border-black bg-white text-[#ff00ff]">
          <div className="grow divide-y divide-black">
            <div className={`${CELL} text-[#990000]`}>Time Created</div>
            <div className={CELL}>Status</div>
            <div className={CELL}>Screen Name</div>
            <div className={CELL}>ID</div>
          </div>
          <div className="w-2 border-l border-black bg-[#ffffcc]" />
          <div className="w-2 border-l border-black bg-[#ffffcc]" />
          <svg viewBox="0 0 16 7" className="absolute top-[30px] left-[78px] h-[7px] w-4">
            <path d="M0 3H2V1H6V3H11V0L15 3.500L11 7V4.500H6V6H2V4.500H0Z" />
          </svg>
        </div>

        <IndexTunnel at="left-[2206px] top-[71px]" color={RED} />
        <IndexTunnel at="left-[2206px] top-[153px]" color={PINK} />
        <Tunnel at="left-[2206px] top-[215px]" fill="bg-[#808000]" />
        <IndexTunnel at="left-[2206px] top-[261px]" color={PINK} />

        {/* outputs */}
        <ArraySize at="left-[2246px] top-[84px]" />
        <Tri at="left-[2294px] top-[84px]" text="-1" />
        <IndexArray at="left-[2350px] top-[64px]" />
        <Terminal at="left-[2398px] top-[78px]" color={RED} glyph="time" />
        <Label at="left-[2432px] top-[79px]">Time Stamp of Oldest Mention</Label>

        <Terminal at="left-[2224px] top-[149px]" color={PINK} glyph="array" />
        <Label at="left-[2258px] top-[149px]">Old Mentions Read</Label>

        <div className="absolute top-[242px] left-[2428px] flex h-[17px] w-[226px] items-center justify-center border border-black bg-[#ffffdd] leading-4 whitespace-nowrap">
          If no tweets are read, don't change max ID
        </div>

        <ArraySize at="left-[2237px] top-[332px]" />
        <Tri at="left-[2285px] top-[332px]" text="-1" />
        <IndexArray at="left-[2316px] top-[320px]" />
        <Tri at="left-[2316px] top-[358px]" text=">0" />
        <Label at="left-[2320px] top-[388px]">Actual Num of Mentions Read</Label>
        <Terminal at="left-[2319px] top-[404px]" color="#0000ff" text="I32" />

        <svg viewBox="0 0 27 27" className="absolute top-[338px] left-[2537px] h-[27px] w-[27px]" fill="none">
          <path d="M0.500 0.500L26.500 13.500L0.500 26.500Z" fill={CREAM} stroke="#000000" />
          <path d="M2 4L11 13.500L2 22M11 13.500H20" stroke="#000000" strokeWidth="2" />
          <text x="1" y="17" fill="#000000" className={`${MONO} text-[8px]`}>
            ?
          </text>
          <path d="M11 8.500H14M12.500 8V12M11.500 16V21M11 16.500H14M11 18.500H13" stroke="#000000" />
        </svg>

        <div className="absolute top-[343px] left-[2570px] flex w-[60px] border border-black bg-white">
          <div className={`${CELL} grow text-[#ff00ff]`}>max ID</div>
          <div className="w-2 border-l border-black bg-[#ffffcc]" />
          <div className="w-2 border-l border-black bg-[#ffffcc]" />
          <svg viewBox="0 0 16 7" className="absolute top-[5px] left-[43px] h-[7px] w-4">
            <path d="M0 3H2V1H6V3H11V0L15 3.500L11 7V4.500H6V6H2V4.500H0Z" />
          </svg>
        </div>
        <Label at="left-[2643px] top-[328px]">Twitter Handle Out</Label>
        <Terminal at="left-[2642px] top-[344px]" color={PINK} glyph="cluster" corner />

        <div className="absolute top-[425px] left-[2458px] flex w-[60px] border border-black bg-white">
          <div className="flex w-4 items-center border-r border-black bg-[#ffffcc]">
            <BundleArrow />
          </div>
          <div className={`${CELL} grow text-[#ff00ff]`}>max ID</div>
        </div>

        <Tunnel at="left-[2747px] top-[215px]" fill="bg-[#808000]" />
        <Tunnel at="left-[2773px] top-[215px]" fill="bg-[#808000]" />
        <Terminal at="left-[2793px] top-[211px]" color={OLIVE} glyph="cluster" />
        <Label at="left-[2826px] top-[212px]">error out</Label>
      </div>
    </main>
  );
}
